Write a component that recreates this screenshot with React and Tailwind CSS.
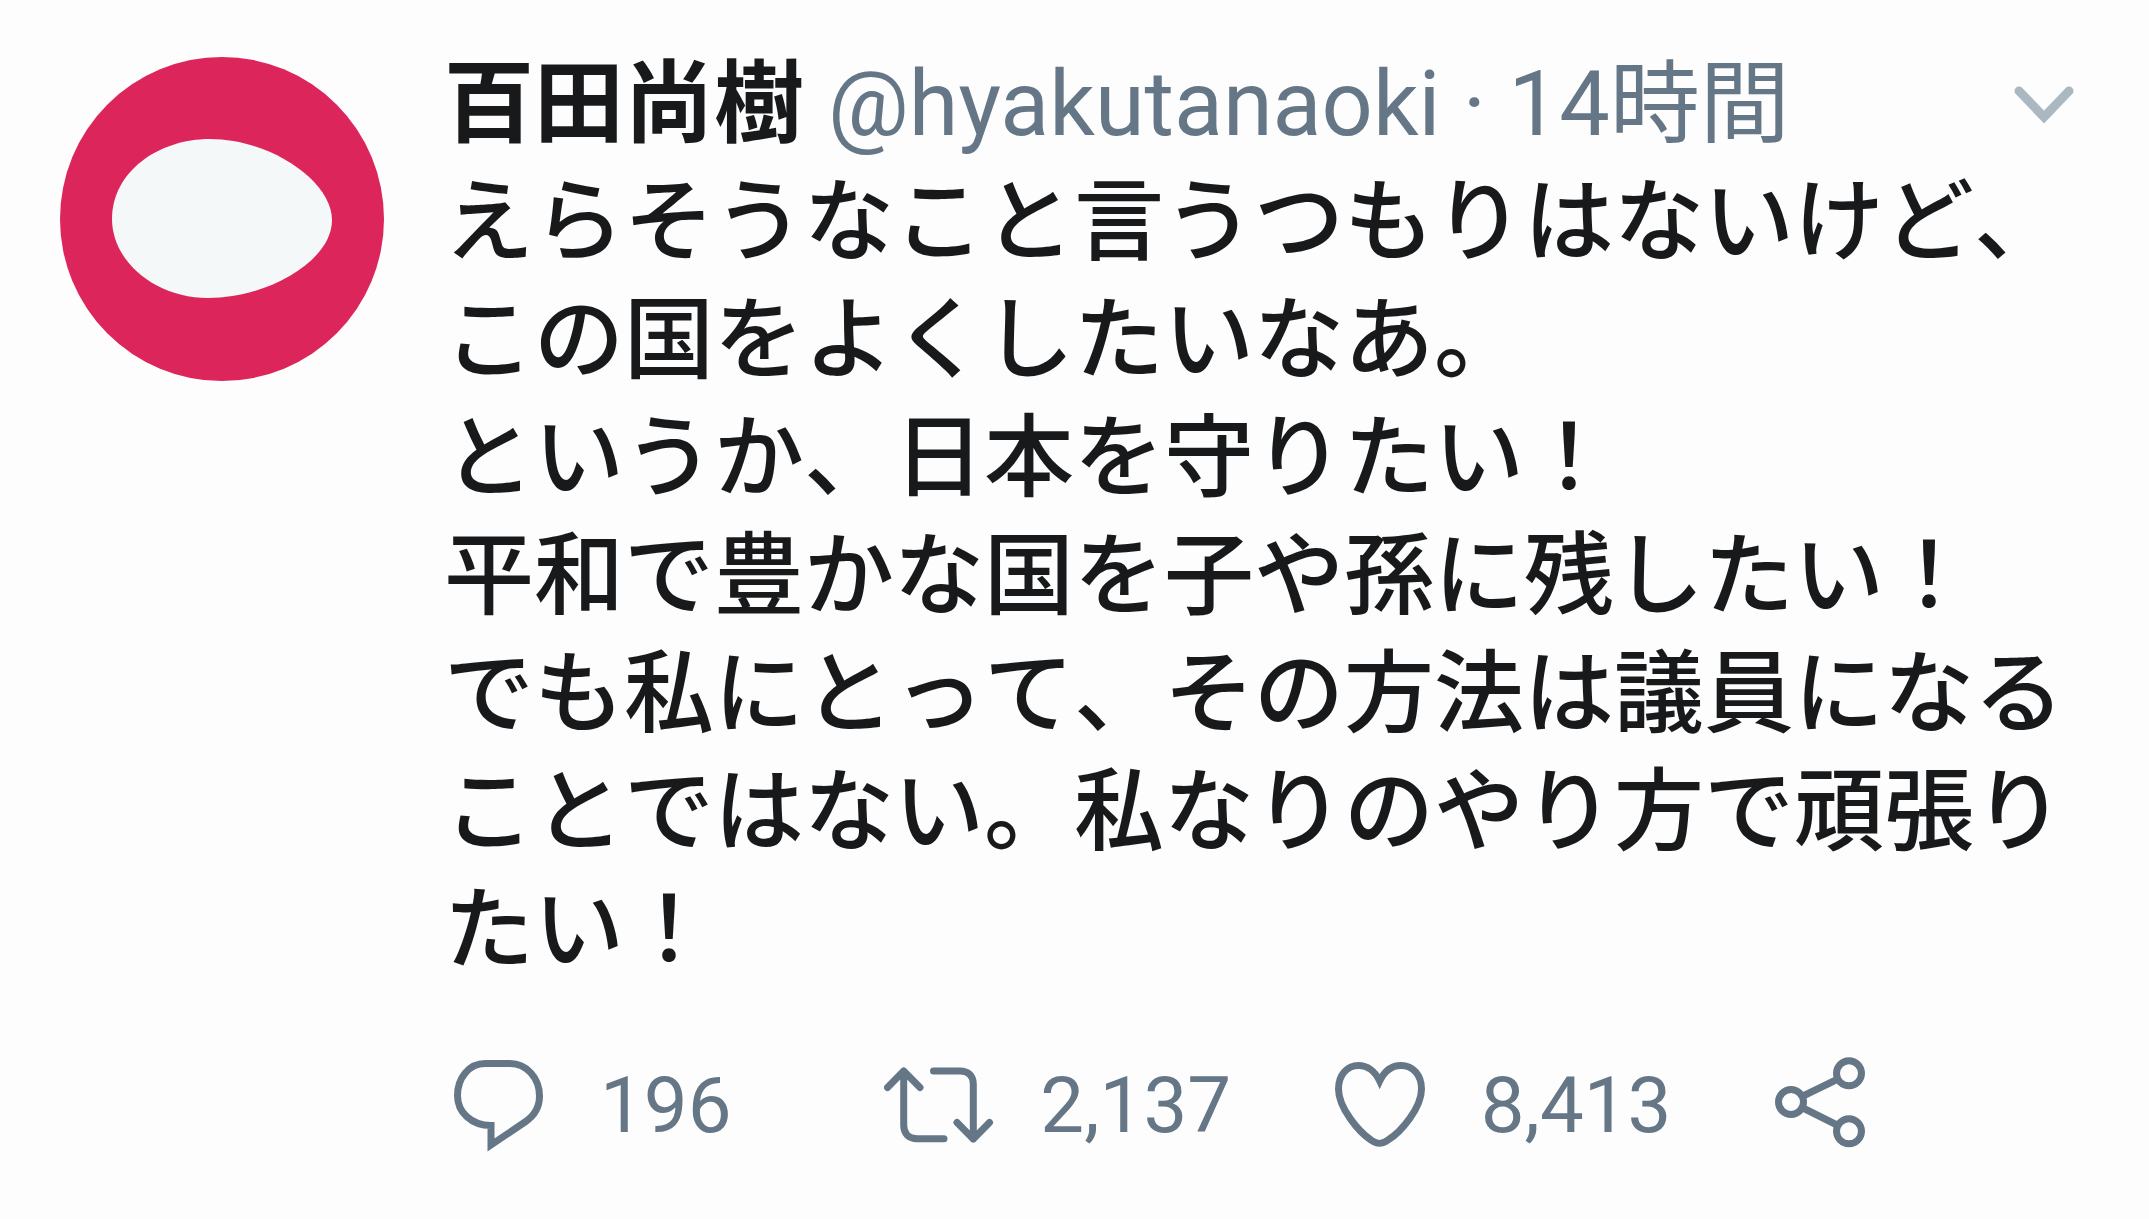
const tweet = {
    name: '百田尚樹',
    handle: '@hyakutanaoki',
    time: '14時間',
    text: [
        'えらそうなこと言うつもりはないけど、この国をよくしたいなあ。',
        'というか、日本を守りたい！',
        '平和で豊かな国を子や孫に残したい！',
        'でも私にとって、その方法は議員になることではない。私なりのやり方で頑張りたい！'
    ]
}

const Icon = ({ children }) => (
    <svg
        className="w-[110px] h-24 shrink-0"
        viewBox="0 0 110 96"
        fill="none"
        stroke="currentColor"
        strokeWidth="7"
        aria-hidden="true">
        {children}
    </svg>
)

const ReplyIcon = () => (
    <Icon>
        <path d="M41 7.5H66C82.5 7.5 95.5 22 95.5 40C95.5 51 90 60 81 66L47 89V69.5C27 69.5 13.5 56 13.5 39.5C13.5 22 25 7.5 41 7.5Z" />
    </Icon>
)

const RetweetIcon = () => (
    <Icon>
        <g strokeLinecap="round" strokeLinejoin="round">
            <path d="M3.5 31.5L19.7 15L36 31.5M19.7 15V69C19.7 78 25 82.7 33 82.7H60" />
            <path d="M49.5 15H76C84.5 15 89.3 20 89.3 28V83M73 66.5L89.3 83L105.5 66.5" />
        </g>
    </Icon>
)

const HeartIcon = () => (
    <Icon>
        <path d="M54.7 25C50 15 42 9.5 33.5 9.5C22 9.5 13.5 19 13.5 33C13.5 52 34 76 46 84C52 88.5 57 88.5 63 84C76 76 96.5 52 96.5 33C96.5 19 88 9.5 76 9.5C67 9.5 59.5 15 54.7 25Z" />
    </Icon>
)

const ShareIcon = () => (
    <Icon>
        <circle cx="26" cy="48" r="12.5" />
        <circle cx="84" cy="19.3" r="12.5" />
        <circle cx="84" cy="77.3" r="12.5" />
        <path d="M37 42.5L73 25M37 53.5L73 71.5" />
    </Icon>
)

const actions = [
    { label: '返信', count: '196', icon: ReplyIcon },
    { label: 'リツイート', count: '2,137', icon: RetweetIcon },
    { label: 'いいね', count: '8,413', icon: HeartIcon },
    { label: '共有', icon: ShareIcon }
]

const Avatar = () => (
    <svg
        className="w-[324px] h-[324px] mt-[11px] shrink-0"
        viewBox="0 0 324 324"
        role="img"
        aria-label={tweet.name}>
        <circle cx="162" cy="162" r="162" fill="#dc265b" />
        <path
            d="M52 162C52 115 98 82 150 82C210 82 272 124 272 163C272 204 208 241 148 241C96 241 52 205 52 162Z"
            fill="#f5f8f8"
        />
    </svg>
)

const App = () => {
    return (
        <main className="min-h-screen bg-[#fdfdfd] font-[Roboto,'Noto_Sans_CJK_JP',sans-serif]">
            <article lang="ja" className="flex gap-[60px] pt-[46px] pr-[74px] pb-16 pl-[60px]">
                <Avatar />
                <div className="flex-1 min-w-0">
                    <header className="flex items-center justify-between text-[90px] leading-[118px]">
                        <div className="flex items-baseline gap-6 whitespace-nowrap">
                            <h1 className="font-bold text-[#17191b]">{tweet.name}</h1>
                            <p className="text-[#657786]">
                                <a href="#profile">{tweet.handle}</a> · <time>{tweet.time}</time>
                            </p>
                        </div>
                        <button type="button" aria-label="メニュー" className="text-[#aab8c2]">
                            <svg
                                className="w-[62px] h-10"
                                viewBox="0 0 62 40"
                                fill="none"
                                stroke="currentColor"
                                strokeWidth="9"
                                strokeLinecap="round">
                                <path d="M6 6L31 32L56 6" />
                            </svg>
                        </button>
                    </header>

                    <div className="text-[90px] leading-[118px] font-medium text-[#17191b] [font-kerning:none]">
                        {tweet.text.map(line => (
                            <p key={line}>{line}</p>
                        ))}
                    </div>

                    <div className="flex mt-16 text-[#657786] text-[78px] leading-24">
                        {actions.map(({ label, count, icon: ActionIcon }) => (
                            <div key={label} className="w-[27%] last:w-auto">
                                <button
                                    type="button"
                                    aria-label={label}
                                    className="flex items-center gap-[46px]">
                                    <ActionIcon />
                                    {count && <span className="pt-1">{count}</span>}
                                </button>
                            </div>
                        ))}
                    </div>
                </div>
            </article>
        </main>
    )
}

export default App
